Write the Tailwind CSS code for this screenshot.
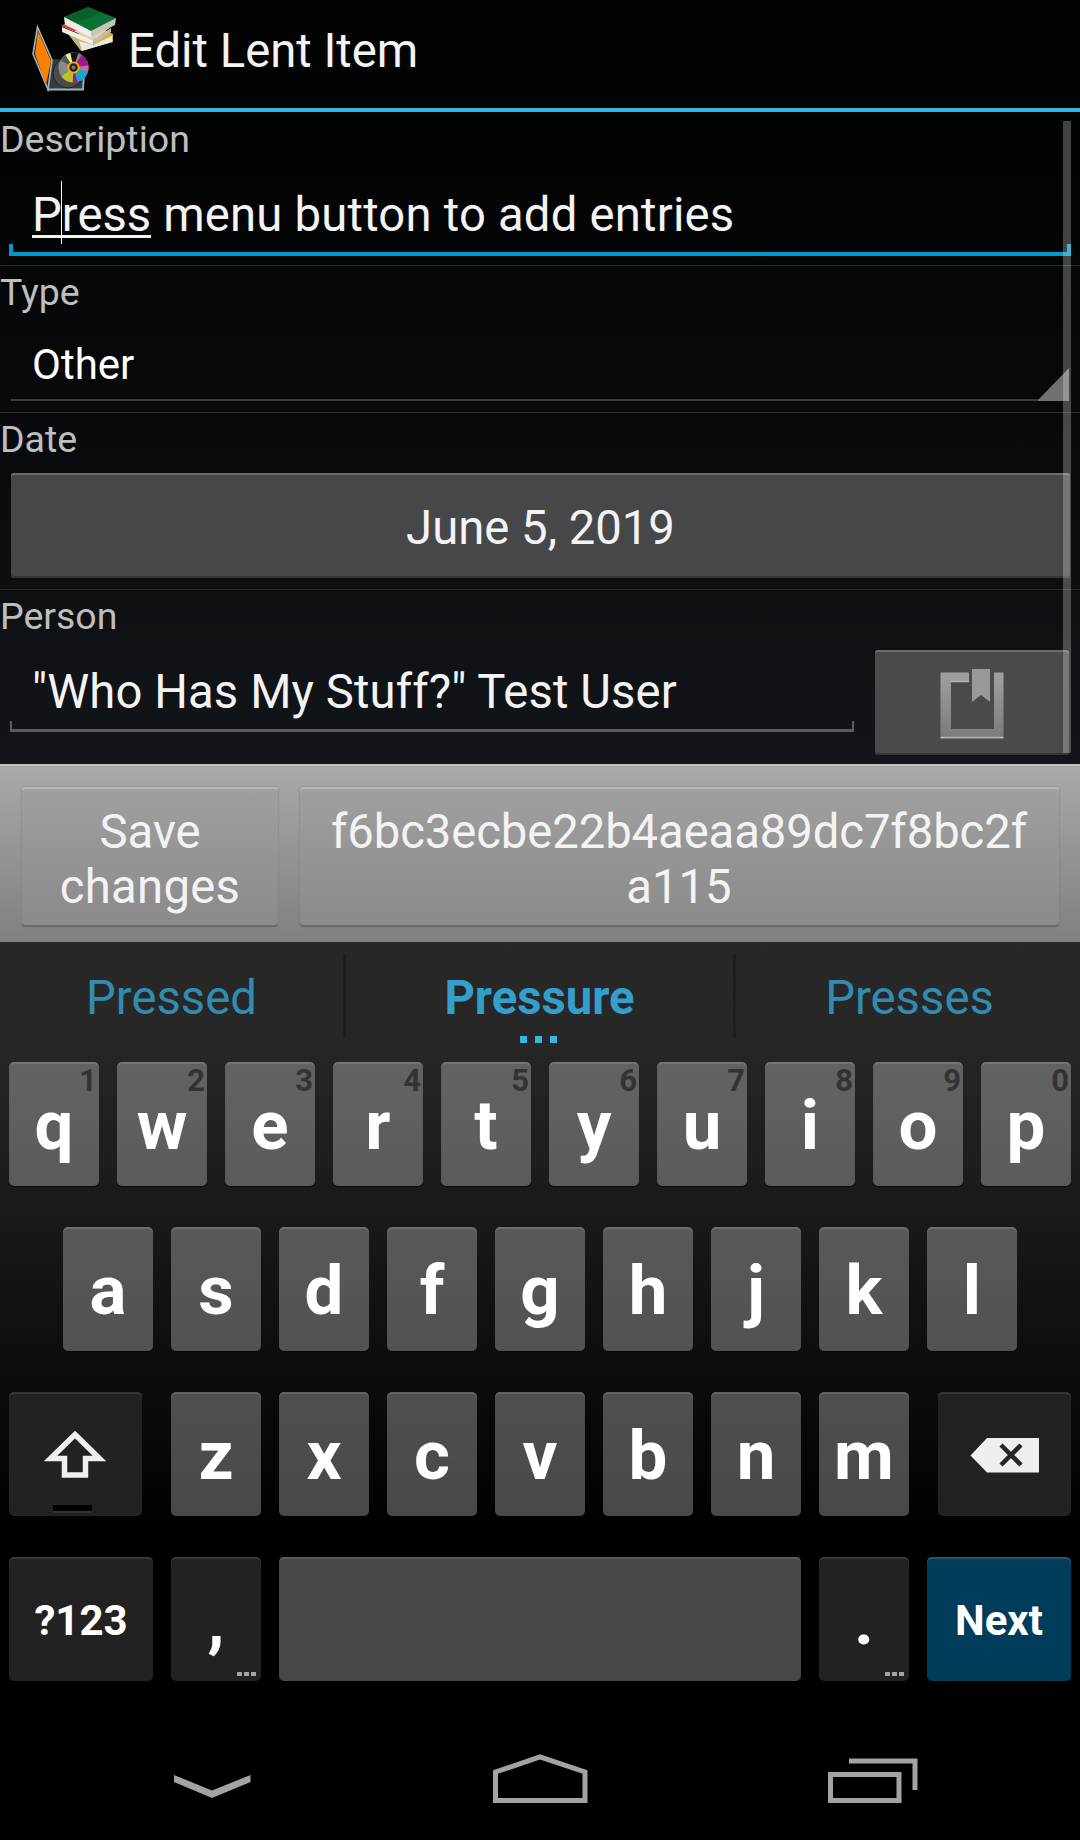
<!DOCTYPE html>
<html lang="en">
<head>
<meta charset="utf-8">
<title>Edit Lent Item</title>
<script src="https://cdn.jsdelivr.net/npm/@tailwindcss/browser@4"></script>
</head>
<body class="bg-black">
<div class="relative w-[1080px] h-[1840px] overflow-hidden bg-black flex flex-col text-[#f3f3f3] text-[47.25px] leading-[55px] font-[Roboto,sans-serif]">

  <!-- Action bar -->
  <header class="h-28 shrink-0 border-b-4 border-[#33b5e5] bg-[#020303] flex items-start">
    <svg class="ml-[30px] mt-1 w-[90px] h-[90px] shrink-0" viewBox="30 4 90 90">
      <!-- books -->
      <path d="M69 35 L81 51 L113 42 L113 34 L104 30Z" fill="#d8b03a"/>
      <path d="M69 35 L80 41 L82 51Z" fill="#b9b09a"/>
      <path d="M79 41 L93 45 L112 36 V42 L82 51Z" fill="#ece8df"/>
      <path d="M61.500 26 L66 23.500 L112 26 L94 40Z" fill="#dcd4c8"/>
      <path d="M61.500 26 L66 23.500 L78 30 L74 31Z" fill="#e2331f"/>
      <path d="M62 27 L93 40 V45 L62 32Z" fill="#f1eee8"/>
      <path d="M93 40 L111 28 V32 L94 45Z" fill="#c9b8a6"/>
      <path d="M64 17 L88 7 L116 18 L91 32Z" fill="#0d7037"/>
      <path d="M64 17 L88 7 L100 12 C92 18 80 21 73 22Z" fill="#0a5f2d"/>
      <path d="M64 17 L91 31 V37 L65 25Z" fill="#f1eee8"/>
      <path d="M91 31 L116 18 L115 25 L91 37Z" fill="#c9c4b8"/>
      <!-- open disc case -->
      <path d="M52 59 L84 61 L83 90 H48Z" fill="#3a3a3c"/>
      <path d="M37.500 27 L52 60 L48 89.500 L33 54Z" fill="#222" stroke="#9db7c0" stroke-width="1.600"/>
      <path d="M38 31 L51 61 L46 85 L35 54Z" fill="#ff8000"/>
      <path d="M47 89.500 H83 L84 74" fill="none" stroke="#9db7c0" stroke-width="1.800"/>
      <circle cx="68" cy="73" r="15" fill="#4a4a4a" stroke="#222"/>
      <g transform="translate(73.500 67.500)">
        <circle r="15" fill="#8a8a8a"/>
        <path d="M0 0 L-13 -7 A15 15 0 0 1 -8 -12.500Z" fill="#55585a"/>
        <path d="M0 0 L-8 -12.500 A15 15 0 0 1 -3 -14.500Z" fill="#eef08a"/>
        <path d="M0 0 L-3 -14.500 A15 15 0 0 1 5 -14Z" fill="#111"/>
        <path d="M0 0 L5 -14 A15 15 0 0 1 8 -12.500Z" fill="#888"/>
        <path d="M0 0 L8 -12.500 A15 15 0 0 1 15 -2Z" fill="#9b1a8c"/>
        <path d="M0 0 L15 -2 A15 15 0 0 1 14.500 4Z" fill="#d564a8"/>
        <path d="M0 0 L14.500 4 A15 15 0 0 1 4 14.500Z" fill="#18a5c9"/>
        <path d="M0 0 L4 14.500 A15 15 0 0 1 -1 15Z" fill="#a11a93"/>
        <path d="M0 0 L-1 15 A15 15 0 0 1 -12 9Z" fill="#a5cf2a"/>
        <path d="M0 0 L-5 14 A15 15 0 0 1 -8 12.500Z" fill="#f4a321"/>
        <circle r="5.200" fill="#222" stroke="#f7b500" stroke-width="1.800"/>
        <circle r="2" fill="#777"/>
      </g>
    </svg>
    <h1 class="pl-2 leading-[102px]">Edit Lent Item</h1>
  </header>

  <!-- Form -->
  <main class="relative h-[652px] shrink-0 bg-linear-to-b from-[#020303] to-[#12161a]">
    <section class="h-[154px] border-b border-[#2b2c2d] pt-1.5">
      <div class="text-[37.5px] leading-[43px] text-[#bebebe]">Description</div>
      <div class="relative ml-[9px] w-[1062px] h-[95px] flex flex-col justify-between">
        <div class="pl-[23px] pt-[27px] text-[#f3f3f3] h-[83px] tracking-[0.2px]"><span class="border-b-3 border-[#f3f3f3] inline-block h-[50px] tracking-normal">Press</span> menu button to add entries</div>
        <div class="h-3 border-x-4 border-b-4 border-[#0099cc]"></div>
        <div class="absolute left-[52px] top-5 w-px h-[63px] bg-white"></div>
      </div>
    </section>
    <section class="h-[147px] border-b border-[#2b2c2d] pt-[5px]">
      <div class="text-[37.5px] leading-[43px] text-[#bebebe]">Type</div>
      <div class="relative ml-[11px] w-[1058px] h-[87px] border-b-2 border-[#3c3d3e] pl-[21px] pt-[23px] text-[42px] text-white">Other
        <svg class="absolute right-0 bottom-[-2px] w-[31px] h-[33px]" viewBox="0 0 32 34"><path d="M0 33 L32 0 V34 H0Z" fill="#6f7070"/></svg>
      </div>
    </section>
    <section class="h-[177px] border-b border-[#2b2c2d] pt-[5px]">
      <div class="text-[37.5px] leading-[43px] text-[#bebebe]">Date</div>
      <div class="mt-3 ml-[11px] w-[1059px] h-[105px] rounded-[3px] bg-[#464748] shadow-[inset_0_2px_0_#6b6c6d,inset_0_-2px_0_#353637] flex items-center justify-center pt-[5px]">June 5, 2019</div>
    </section>
    <section class="h-[174px] pt-[5px]">
      <div class="text-[37.5px] leading-[43px] text-[#bebebe]">Person</div>
      <div class="flex">
        <div class="ml-[10px] w-[844px] h-[94px] flex flex-col justify-between">
          <div class="pl-[22px] pt-[27px] tracking-[0.1px]">"Who Has My Stuff?" Test User</div>
          <div class="h-[11px] border-x-2 border-b-3 border-[#5a5c5e]"></div>
        </div>
        <div class="mt-3 ml-[21px] w-[194px] h-[105px] rounded-[3px] bg-[#484a4b] shadow-[inset_0_2px_0_#6b6c6d,inset_0_-2px_0_#353637] flex justify-center">
          <svg class="mt-4 w-[68px] h-[76px]" viewBox="938 666 68 76">
            <defs><linearGradient id="bk" x1="0" y1="0" x2="0" y2="1"><stop offset="0" stop-color="#a0a0a0"/><stop offset="1" stop-color="#7b7b7b"/></linearGradient></defs>
            <path d="M940.500 672.500 H969 V682 H951 V729 H994 V672.500 H1003.500 V738.500 H940.500Z" fill="url(#bk)"/>
            <path d="M951 681.500 H969 M940.500 737.500 H1003.500" stroke="#b8b8b8" stroke-width="1.500" fill="none"/>
            <path d="M972 669 H990 V702 L981 695 L972 702Z" fill="#999"/>
          </svg>
        </div>
      </div>
    </section>
    <div class="absolute left-[1063px] top-[9px] w-2 h-[632px] rounded-[1px] bg-white/25"></div>
  </main>

  <!-- Button panel -->
  <footer class="h-[178px] shrink-0 border-t-2 border-[#c2c2c2] bg-linear-to-b from-[#a9a9a9] to-[#808080] flex pt-[21px] pl-[22px] gap-[21.5px] text-center">
    <div class="w-64 h-[140px] rounded-[3px] bg-linear-to-b from-[#a0a0a0] to-[#8a8a8a] shadow-[inset_0_2px_0_#b6b6b6,inset_0_-2px_0_#6a6a6a,0_0_2px_#777] pt-[18px]">Save<br><span class="tracking-[0.3px]">changes</span></div>
    <div class="w-[759px] h-[140px] rounded-[3px] bg-linear-to-b from-[#a0a0a0] to-[#8a8a8a] shadow-[inset_0_2px_0_#b6b6b6,inset_0_-2px_0_#6a6a6a,0_0_2px_#777] pt-[18px]"><span class="tracking-[-0.1px]">f6bc3ecbe22b4aeaa89dc7f8bc2f</span><br>a115</div>
  </footer>

  <!-- Keyboard -->
  <div class="h-[778px] shrink-0 bg-[linear-gradient(#282828_0,#272727_100px,#000_590px)]">
    <div class="h-[120px] pt-3 flex text-[#318cb2] text-center">
      <div class="w-[343px] pt-[17px]">Pressed</div>
      <div class="w-[3px] h-[84px] bg-[#1e1e1e]"></div>
      <div class="w-[387px] pt-[17px] font-bold text-[#33a0cc] flex flex-col items-center">Pressure
        <div class="flex gap-2 mt-[10px] -ml-[2px]"><i class="size-[7px] bg-[#33b5e5]"></i><i class="size-[7px] bg-[#33b5e5]"></i><i class="size-[7px] bg-[#33b5e5]"></i></div>
      </div>
      <div class="w-[3px] h-[84px] bg-[#1e1e1e]"></div>
      <div class="w-[344px] pt-[17px] pl-[3px]">Presses</div>
    </div>
    <div id="keys" class="flex flex-col gap-[41px] text-white font-bold text-[69px]"></div>
  </div>

  <!-- Navigation bar -->
  <nav class="h-[120px] shrink-0 bg-black">
    <svg class="w-[1080px] h-[120px]" viewBox="0 1720 1080 120" fill="none" stroke="#a3a3a3" stroke-width="5">
      <path d="M174 1775 L212 1790.500 L250.500 1775 V1782 L212 1798 L174 1782Z" fill="#a3a3a3" stroke="none"/>
      <path d="M495.500 1800.500 V1772 L540 1757 L585 1772 V1800.500Z"/>
      <path d="M830.500 1774.500 H899 V1800.500 H830.500Z M849 1761 H915 V1790"/>
    </svg>
  </nav>
</div>
<script>
  const light = 'bg-white/28 shadow-[inset_0_2px_0_rgba(255,255,255,.12),0_1px_1px_rgba(0,0,0,.6)]';
  const dark = 'bg-[#222] shadow-[inset_0_2px_0_#363636]';
  const key = (inner, tone = light, width = 'w-[90px]') =>
    `<div class="relative ${width} h-[124px] rounded-[5px] flex items-center justify-center pt-[2px] ${tone}">${inner}</div>`;
  const letters = s => [...s].map(c => key(c)).join('');
  const more = '<span class="absolute right-[5px] bottom-[5px] flex gap-[2px]"><i class="w-[5px] h-1 bg-[#a5a5a5]"></i><i class="w-[5px] h-1 bg-[#a5a5a5]"></i><i class="w-[5px] h-1 bg-[#a5a5a5]"></i></span>';
  const shift = '<svg class="absolute inset-0 w-full h-full" viewBox="9 1392 133 124"><path d="M75 1434.500 L99.500 1458.500 H85.500 V1475 H64.500 V1458.500 H50.500Z" fill="none" stroke="#f0f0f0" stroke-width="5.500"/><path d="M53 1505 H92 V1511 H53Z" fill="#000"/><path d="M53 1512 H92" stroke="#444"/></svg>';
  const del = '<svg class="absolute inset-0 w-full h-full" viewBox="938 1392 133 124"><path d="M970.500 1455.500 L987 1438 H1039 V1472.500 H987Z" fill="#efefef"/><path d="M1001 1445 L1021 1465 M1021 1445 L1001 1465" stroke="#262626" stroke-width="4.500"/></svg>';
  const topRow = [...'qwertyuiop'].map((c, i) =>
    key(c + `<span class="absolute right-[2px] top-[1px] text-[31px] leading-[36px] text-[#333]">${(i + 1) % 10}</span>`)).join('');
  document.getElementById('keys').innerHTML =
    `<div class="flex gap-[18px] pl-[9px]">${topRow}</div>` +
    `<div class="flex gap-[18px] pl-[63px]">${letters('asdfghjkl')}</div>` +
    `<div class="flex justify-between px-[9px]">${key(shift, dark, 'w-[133px]')}<div class="flex gap-[18px]">${letters('zxcvbnm')}</div>${key(del, dark, 'w-[133px]')}</div>` +
    `<div class="flex gap-[18px] pl-[9px]">` +
      key('<span class="text-[42px]">?123</span>', dark, 'w-36') + key(',' + more, dark) + key('', light, 'w-[522px]') + key('.' + more, dark) +
      key('<span class="text-[42px]">Next</span>', 'bg-[#003d5b] shadow-[inset_0_2px_0_#1f5673]', 'w-36') +
    `</div>`;
</script>
</body>
</html>
